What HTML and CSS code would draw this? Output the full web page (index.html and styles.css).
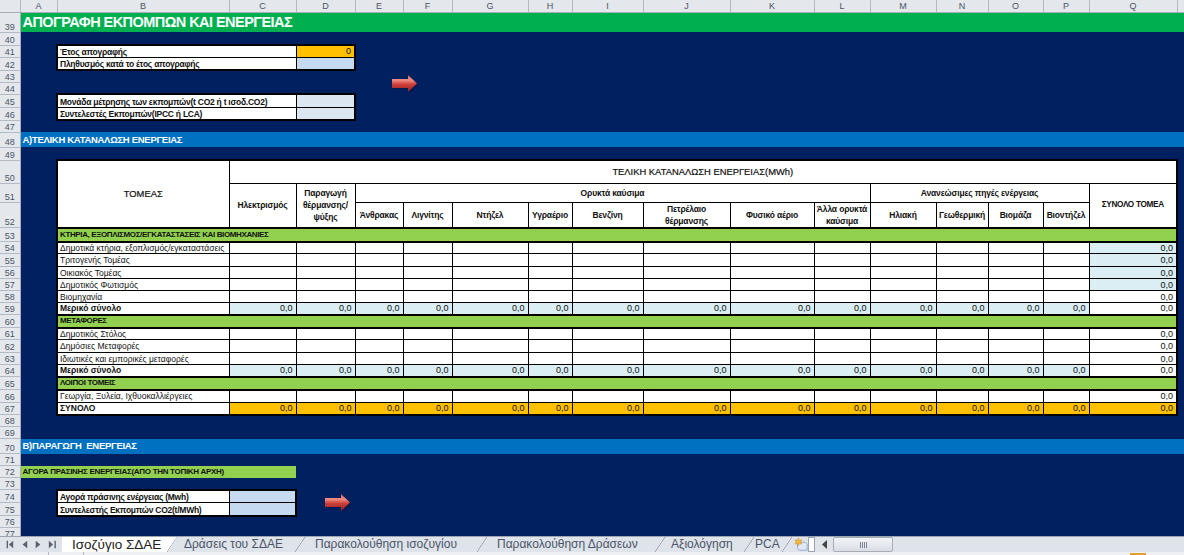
FILE: index.html
```html
<!DOCTYPE html>
<html lang="en">
<head>
  <meta charset="UTF-8" />
  <title>Ισοζύγιο ΣΔΑΕ</title>
  <link rel="stylesheet" href="styles.css">
</head>
<body>
  <div class="sheet">
    <table id="grid">
      <colgroup>
        <col class="c-head"><col class="c-a"><col class="c-b"><col class="c-c"><col class="c-d">
        <col class="c-e"><col class="c-f"><col class="c-g"><col class="c-h"><col class="c-i">
        <col class="c-j"><col class="c-k"><col class="c-l"><col class="c-m"><col class="c-n">
        <col class="c-o"><col class="c-p"><col class="c-q"><col class="c-r">
      </colgroup>
      <tbody id="rows"></tbody>
    </table>

    <!-- Arrow shapes floating over the cells -->
    <svg class="arrow arrow-top" viewBox="0 0 27 19"><use href="#redArrow"/></svg>
    <svg class="arrow arrow-bottom" viewBox="0 0 27 19"><use href="#redArrow"/></svg>
  </div>

  <div class="tabbar">
    <svg class="tabnav" viewBox="0 0 62 16">
      <path d="M5 4h1.500v8H5zM12 4v8L7.500 8zM27 4v8l-5-4zM36 4v8l5-4zM50 4v8l4.500-4zM56 4h1.500v8H56z"/>
    </svg>
    <div class="tabs">
      <div class="tab active">Ισοζύγιο ΣΔΑΕ</div>
      <div class="tab">Δράσεις του ΣΔΑΕ</div>
      <div class="tab">Παρακολούθηση ισοζυγίου</div>
      <div class="tab">Παρακολούθηση Δράσεων</div>
      <div class="tab">Αξιολόγηση</div>
      <div class="tab">PCA</div>
    </div>
    <svg class="newsheet" viewBox="0 0 16 15">
      <path d="M4 5h9l2 2v7H6l-2-2z" fill="#dfe8f4" stroke="#8ea6c6"/>
      <path d="M5 0l1 2.500L9 2 7.500 4.500 9 7 6 6.500 5 9 4 6.500 1 7l1.500-2.500L1 2l3 .5z" fill="#f5b83d" stroke="#c98a1c" stroke-width=".5"/>
    </svg>
    <div class="splitter"></div>
    <svg class="scroll-left" viewBox="0 0 6 9"><path d="M5 0v9L0 4.500z"/></svg>
    <div class="thumb"><span></span><span></span><span></span><span></span></div>
  </div>
  <div class="statusbar">
    <span class="tick tick-one"></span>
    <span class="tick tick-two"></span>
    <span class="status-mark"></span>
  </div>

  <svg class="defs" width="0" height="0">
    <defs>
      <linearGradient id="arrowFill" x1="0" y1="0" x2="0" y2="1">
        <stop offset="0" stop-color="#d9534a"/>
        <stop offset=".3" stop-color="#ee8f84"/>
        <stop offset=".55" stop-color="#cf3f38"/>
        <stop offset="1" stop-color="#8a2320"/>
      </linearGradient>
      <g id="redArrow">
        <path d="M1 6h16V2l9 8.500-9 8.500v-5H1z" fill="#00143f" opacity=".55"/>
        <path d="M0 4h16V0l9 8.500-9 8.500v-4H0z" fill="url(#arrowFill)"/>
      </g>
    </defs>
  </svg>

  <script>
    const sectors = [
      { n: 53, h: 14, band: 'ΚΤΗΡΙΑ, ΕΞΟΠΛΙΣΜΟΣ/ΕΓΚΑΤΑΣΤΑΣΕΙΣ ΚΑΙ ΒΙΟΜΗΧΑΝΙΕΣ' },
      { n: 54, h: 12, label: 'Δημοτικά κτήρια, εξοπλισμός/εγκαταστάσεις', tint: true },
      { n: 55, h: 13, label: 'Τριτογενής Τομέας', tint: true },
      { n: 56, h: 12, label: 'Οικιακός Τομέας', tint: true },
      { n: 57, h: 12, label: 'Δημοτικός Φωτισμός', tint: true },
      { n: 58, h: 12, label: 'Βιομηχανία' },
      { n: 59, h: 12, total: 'Μερικό σύνολο' },
      { n: 60, h: 13, band: 'ΜΕΤΑΦΟΡΕΣ' },
      { n: 61, h: 12, label: 'Δημοτικός Στόλος' },
      { n: 62, h: 13, label: 'Δημόσιες Μεταφορές' },
      { n: 63, h: 12, label: 'Ιδιωτικές και εμπορικές μεταφορές' },
      { n: 64, h: 12, total: 'Μερικό σύνολο' },
      { n: 65, h: 13, band: 'ΛΟΙΠΟΙ ΤΟΜΕΙΣ' },
      { n: 66, h: 13, label: 'Γεωργία, Ξυλεία, Ιχθυοκαλλιέργειες' },
      { n: 67, h: 12, grand: 'ΣΥΝΟΛΟ' }
    ];

    const fossil = ['Άνθρακας', 'Λιγνίτης', 'Ντήζελ', 'Υγραέριο', 'Βενζίνη', 'Πετρέλαιο<br>θέρμανσης', 'Φυσικό αέριο', 'Άλλα ορυκτά<br>καύσιμα'];
    const renewable = ['Ηλιακή', 'Γεωθερμική', 'Βιομάζα', 'Βιοντήζελ'];

    function blanks(count) {
      return '<td></td>'.repeat(count);
    }

    function heads(names) {
      return names.map(name => `<td class="line small">${name}</td>`).join('');
    }

    // Small framed block of two rows in columns B-D
    function boxRow(label, cls, value, edge) {
      return `<td></td><td colspan="2" class="line box-label ${edge}">${label}</td>` +
        `<td class="line box-value ${cls} ${edge}">${value}</td>` + blanks(14);
    }

    function sectorRow(row) {
      if (row.band) {
        return `<td></td><td colspan="16" class="band">${row.band}</td><td></td>`;
      }
      if (row.label) {
        return `<td></td><td class="line text edge-l">${row.label}</td>` +
          '<td class="line"></td>'.repeat(14) +
          `<td class="line num edge-r ${row.tint ? 'tint' : ''}">0,0</td><td></td>`;
      }
      const fill = row.total ? 'tint' : 'orange';
      const bottom = row.grand ? 'edge-b' : '';
      return `<td></td><td class="line strong edge-l ${bottom}">${row.total || row.grand}</td>` +
        `<td class="line num ${fill} ${bottom}">0,0</td>`.repeat(14) +
        `<td class="line num edge-r ${row.grand ? 'orange' : ''} ${bottom}">0,0</td><td></td>`;
    }

    const rows = [
      { n: 39, h: 20, html: '<td colspan="18" class="title">ΑΠΟΓΡΑΦΗ ΕΚΠΟΜΠΩΝ ΚΑΙ ΕΝΕΡΓΕΙΑΣ</td>' },
      { n: 40, h: 13 },
      { n: 41, h: 12, html: boxRow('Έτος απογραφής', 'orange num', '0', 'edge-t') },
      { n: 42, h: 13, html: boxRow('Πληθυσμός κατά το έτος απογραφής', 'blue', '', 'edge-b') },
      { n: 43, h: 12 },
      { n: 44, h: 12 },
      { n: 45, h: 13, html: boxRow('Μονάδα μέτρησης των εκπομπών(t CO2 ή t ισοδ.CO2)', 'pale', '', 'edge-t') },
      { n: 46, h: 13, html: boxRow('Συντελεστές Εκπομπών(IPCC ή LCA)', 'pale', '', 'edge-b') },
      { n: 47, h: 12 },
      { n: 48, h: 15, html: '<td colspan="18" class="section">Α)ΤΕΛΙΚΗ ΚΑΤΑΝΑΛΩΣΗ ΕΝΕΡΓΕΙΑΣ</td>' },
      { n: 49, h: 13 },
      { n: 50, h: 23, html: '<td></td><td rowspan="3" class="line head-main edge-t edge-l edge-b">ΤΟΜΕΑΣ</td>' +
          '<td colspan="15" class="line head-main edge-t edge-r">ΤΕΛΙΚΗ ΚΑΤΑΝΑΛΩΣΗ ΕΝΕΡΓΕΙΑΣ(MWh)</td><td></td>' },
      { n: 51, h: 19, html: '<td></td><td rowspan="2" class="line small">Ηλεκτρισμός</td>' +
          '<td rowspan="2" class="line small">Παραγωγή<br>θέρμανσης/<br>ψύξης</td>' +
          '<td colspan="8" class="line small">Ορυκτά καύσιμα</td>' +
          '<td colspan="4" class="line small">Ανανεώσιμες πηγές ενέργειας</td>' +
          '<td rowspan="2" class="line small caps edge-r">ΣΥΝΟΛΟ ΤΟΜΕΑ</td><td></td>' },
      { n: 52, h: 25, html: '<td></td>' + heads(fossil) + heads(renewable) + '<td></td>' },
      ...sectors.map(row => ({ n: row.n, h: row.h, html: sectorRow(row) })),
      { n: 68, h: 12 },
      { n: 69, h: 12 },
      { n: 70, h: 15, html: '<td colspan="18" class="section">Β)ΠΑΡΑΓΩΓΗ&nbsp; ΕΝΕΡΓΕΙΑΣ</td>' },
      { n: 71, h: 12 },
      { n: 72, h: 12, html: '<td colspan="3" class="green-label">ΑΓΟΡΑ ΠΡΑΣΙΝΗΣ ΕΝΕΡΓΕΙΑΣ(ΑΠΟ ΤΗΝ ΤΟΠΙΚΗ ΑΡΧΗ)</td>' + blanks(15) },
      { n: 73, h: 12 },
      { n: 74, h: 13, html: '<td></td><td class="line box-label edge-t">Αγορά πράσινης ενέργειας (Mwh)</td><td class="line box-value blue edge-t"></td>' + blanks(15) },
      { n: 75, h: 13, html: '<td></td><td class="line box-label edge-b">Συντελεστής Εκπομπών CO2(t/MWh)</td><td class="line box-value blue edge-b"></td>' + blanks(15) },
      { n: 76, h: 12 },
      { n: 77, h: 12 }
    ];

    // Draw the column letters and then every sheet row
    function renderGrid() {
      const letters = ['A', 'B', 'C', 'D', 'E', 'F', 'G', 'H', 'I', 'J', 'K', 'L', 'M', 'N', 'O', 'P', 'Q', ''];
      let html = '<tr style="height:12px"><th class="corner"></th>' +
        letters.map(letter => `<th class="col-name">${letter}</th>`).join('') + '</tr>';

      rows.forEach(row => {
        html += `<tr style="height:${row.h}px"><th class="row-name">${row.n}</th>${row.html || blanks(18)}</tr>`;
      });

      document.getElementById('rows').innerHTML = html;
    }

    renderGrid();
  </script>
</body>
</html>
```

FILE: styles.css
```css
html, body {
  margin: 0;
  height: 555px;
  overflow: hidden;
}

body {
  display: flex;
  flex-direction: column;
  font-family: "Liberation Sans", Arial, sans-serif;
  background: #dfe3ea;
}

.sheet {
  position: relative;
  height: 536px;
  overflow: hidden;
  background: #002060;
}

.defs {
  position: absolute;
}

#grid {
  table-layout: fixed;
  width: 1184px;
  border-collapse: collapse;
  background: #002060;
}

.c-head { width: 20px; }
.c-a { width: 37px; }
.c-b { width: 172px; }
.c-c { width: 67px; }
.c-d { width: 59px; }
.c-e { width: 48px; }
.c-f { width: 49px; }
.c-g { width: 76px; }
.c-h { width: 44px; }
.c-i { width: 71px; }
.c-j { width: 87px; }
.c-k { width: 84px; }
.c-l { width: 56px; }
.c-m { width: 66px; }
.c-n { width: 52px; }
.c-o { width: 55px; }
.c-p { width: 46px; }
.c-q { width: 88px; }
.c-r { width: 7px; }

td, th {
  padding: 0;
  overflow: hidden;
  white-space: nowrap;
  font-size: 9px;
  line-height: 10px;
}

th {
  font-weight: normal;
  color: #4b5563;
  background: #e4e7ec;
}

.corner, .col-name {
  border-right: 1px solid #b4bac4;
  border-bottom: 1px solid #a6adb8;
}

.row-name {
  vertical-align: bottom;
  border-bottom: 1px solid #b4bac4;
  border-right: 1px solid #a6adb8;
}

.title {
  padding-left: 2px;
  font-size: 14.5px;
  letter-spacing: -0.55px;
  font-weight: bold;
  color: #fff;
  background: #00b050;
}

.section {
  padding-left: 2px;
  font-size: 9.5px;
  letter-spacing: -0.3px;
  font-weight: bold;
  color: #fff;
  background: #0070c0;
}

.green-label {
  padding-left: 2px;
  font-size: 8px;
  letter-spacing: -0.3px;
  font-weight: bold;
  color: #111;
  background: #92d050;
}

.line {
  border: 1px solid #000;
  background: #fff;
  color: #111;
}

.edge-t { border-top: 2px solid #000; }
.edge-b { border-bottom: 2px solid #000; }
.edge-l { border-left: 2px solid #000; }
.edge-r { border-right: 2px solid #000; }

.box-label {
  padding-left: 2px;
  font-size: 8.5px;
  letter-spacing: -0.25px;
  font-weight: bold;
  vertical-align: bottom;
  border-left: 2px solid #000;
}

.box-value {
  border-right: 2px solid #000;
}

.head-main {
  text-align: center;
  font-size: 9.4px;
  -webkit-text-stroke: 0.2px #111;
}

.small {
  text-align: center;
  font-size: 8.5px;
  letter-spacing: -0.15px;
  font-weight: bold;
  line-height: 12px;
}

.small.caps {
  font-size: 8.2px;
  letter-spacing: -0.3px;
}

.band {
  padding-left: 2px;
  font-size: 8px;
  letter-spacing: -0.37px;
  font-weight: bold;
  color: #111;
  background: #92d050;
  border: 2px solid #000;
}

.text, .strong {
  padding-left: 2px;
  font-size: 8.5px;
}

.strong {
  font-weight: bold;
}

.num {
  padding-right: 3px;
  text-align: right;
}

.orange { background: #ffc000; }
.blue { background: #c5d9f1; }
.pale { background: #dce6f1; }
.tint { background: #daeef3; }

.arrow {
  position: absolute;
  width: 27px;
  height: 19px;
}

.arrow-top {
  left: 392px;
  top: 75px;
}

.arrow-bottom {
  left: 325px;
  top: 494px;
}

.tabbar {
  display: flex;
  height: 16px;
  border-top: 1px solid #9aa4b2;
  box-sizing: border-box;
  background: #dfe3ea;
}

.tabnav {
  flex: none;
  width: 62px;
  height: 15px;
  fill: #5a6270;
}

.tabs {
  display: grid;
  flex: none;
  grid-template-columns: 115px 128px 182px 178px 89px 38px;
  height: 15px;
}

.tab {
  position: relative;
  padding-left: 10px;
  font-size: 12px;
  line-height: 15px;
  color: #4a5568;
  white-space: nowrap;
}

.tab:nth-child(2) { padding-left: 7px; }
.tab:nth-child(5) { padding-left: 6px; }
.tab:nth-child(6) { padding-left: 1px; }

.tab::after {
  content: "";
  position: absolute;
  right: 0;
  top: 0;
  width: 10px;
  height: 15px;
  background: linear-gradient(to top left, transparent calc(50% - 0.6px), #8a94a6 50%, transparent calc(50% + 0.6px));
}

.tab.active {
  color: #222;
  font-size: 13.5px;
  background: #fff;
  clip-path: polygon(0 0, 100% 0, calc(100% - 9px) 100%, 0 100%);
}

.newsheet {
  flex: none;
  width: 14px;
  height: 15px;
  margin-left: 2px;
}

.splitter {
  flex: none;
  box-sizing: border-box;
  width: 7px;
  height: 15px;
  border: 1px solid #9aa4b2;
  background: #fff;
}

.scroll-left {
  flex: none;
  width: 6px;
  height: 9px;
  margin: 3px 0 0 7px;
  fill: #444;
}

.thumb {
  display: flex;
  flex: none;
  gap: 1px;
  align-items: center;
  justify-content: center;
  box-sizing: border-box;
  width: 60px;
  height: 15px;
  margin-left: 5px;
  border: 1px solid #a6adb8;
  border-radius: 2px;
  background: linear-gradient(#f2f4f7, #d9dde4);
}

.thumb span {
  width: 1px;
  height: 6px;
  background: #7b8494;
}

.statusbar {
  position: relative;
  flex: 1;
  background: #eef0f3;
}

.tick {
  position: absolute;
  top: 0;
  width: 1px;
  height: 3px;
  background: #b4bac4;
}

.tick-one { left: 48px; }
.tick-two { left: 83px; }

.status-mark {
  position: absolute;
  left: 1130px;
  top: 1px;
  width: 16px;
  height: 2px;
  background: #e0a030;
}
```
